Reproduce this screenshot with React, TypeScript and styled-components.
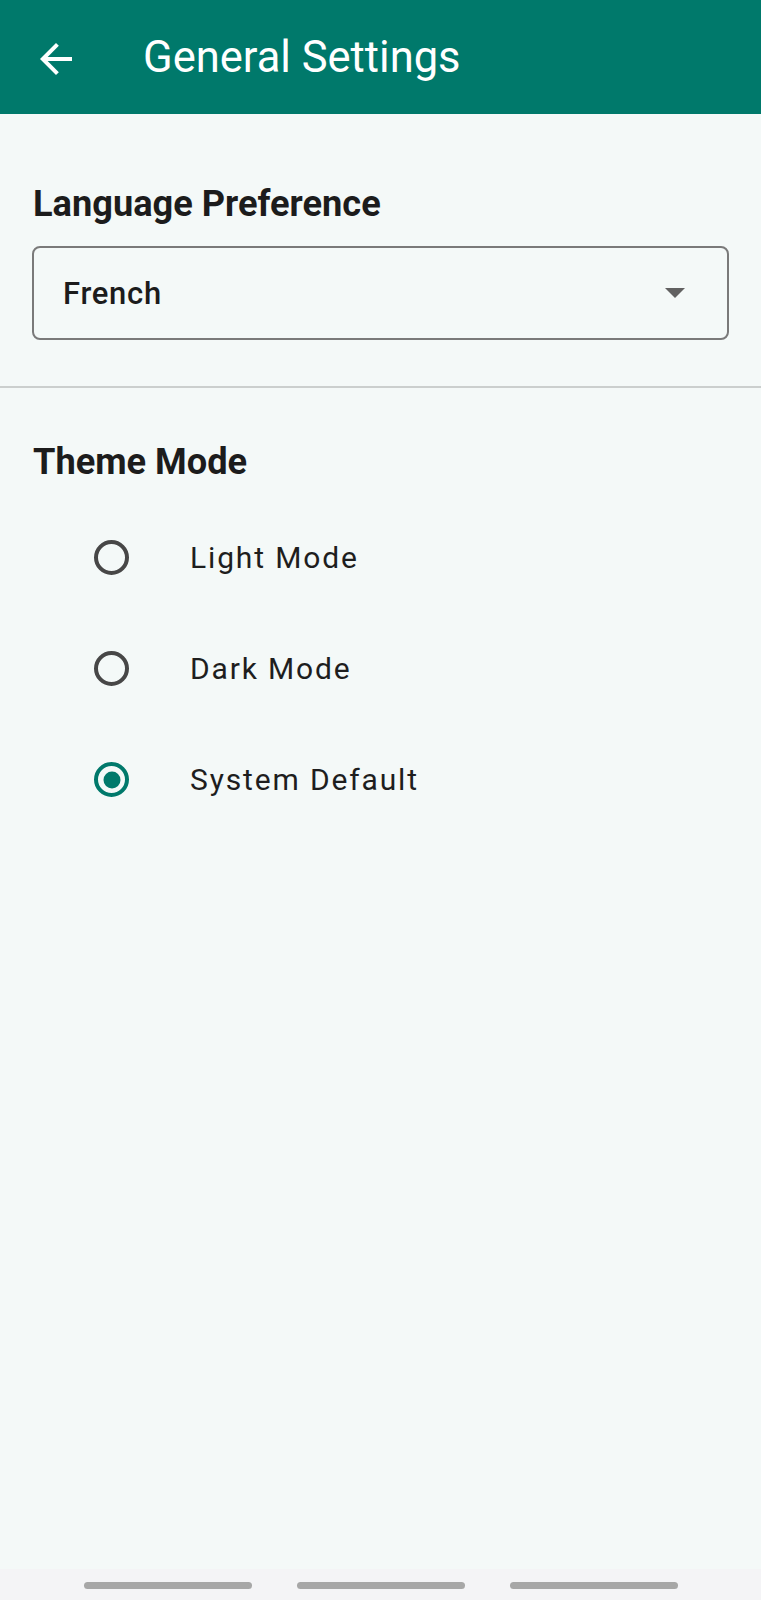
import React, { useState } from "react";
import styled, { createGlobalStyle } from "styled-components";

const GlobalStyle = createGlobalStyle`
  html, body {
    margin: 0;
    padding: 0;
  }

  body {
    background: #f4f9f8;
    font-family: Roboto, "Noto Sans", "Liberation Sans", sans-serif;
    -webkit-font-smoothing: antialiased;
  }
`;

const StyledPage = styled.div`
  display: flex;
  flex-direction: column;
  min-height: 1600px;
  background: #f4f9f8;
`;

const StyledAppBar = styled.header`
  display: flex;
  align-items: center;
  height: 114px;
  padding-left: 32px;
  background: #00796b;
  box-sizing: border-box;
`;

const StyledBackButton = styled.button`
  display: flex;
  align-items: center;
  justify-content: center;
  width: 48px;
  height: 48px;
  margin-top: 4px;
  padding: 0;
  border: none;
  background: transparent;
  color: #ffffff;
  cursor: pointer;
`;

const StyledTitle = styled.h1`
  margin: 0 0 0 63px;
  font-size: 43.5px;
  font-weight: 400;
  line-height: normal;
  color: #ffffff;
`;

const StyledMain = styled.main`
  flex: 1;
`;

const StyledSection = styled.section<{ $top: number; $bottom: number }>`
  padding: ${({ $top, $bottom }) => `${$top}px 32px ${$bottom}px`};
`;

const StyledHeading = styled.h2`
  margin: 0 0 0 1px;
  font-size: 36.2px;
  font-weight: 700;
  line-height: 44px;
  color: #1c1c1c;
`;

const StyledSelect = styled.div`
  display: flex;
  align-items: center;
  justify-content: space-between;
  height: 94px;
  margin-top: 20px;
  padding: 0 42px 0 29px;
  border: 2px solid #7a7a7a;
  border-radius: 8px;
  box-sizing: border-box;
  cursor: pointer;
`;

const StyledSelectValue = styled.span`
  font-size: 31px;
  font-weight: 500;
  letter-spacing: 0.7px;
  color: #1c1c1c;
`;

const StyledCaret = styled.span`
  width: 0;
  height: 0;
  border-left: 10px solid transparent;
  border-right: 10px solid transparent;
  border-top: 10px solid #616161;
`;

const StyledDivider = styled.hr`
  margin: 0;
  border: none;
  height: 2px;
  background: #cbcfce;
`;

const StyledRadioList = styled.div`
  display: flex;
  flex-direction: column;
  margin-top: 18px;
`;

const StyledRadioRow = styled.label`
  display: flex;
  align-items: center;
  height: 111px;
  padding-left: 62px;
  cursor: pointer;
`;

const StyledRadio = styled.span<{ $checked: boolean }>`
  position: relative;
  flex: none;
  width: 35px;
  height: 35px;
  border: 4px solid ${({ $checked }) => ($checked ? "#00796b" : "#474747")};
  border-radius: 50%;
  box-sizing: border-box;

  &::after {
    content: "";
    display: ${({ $checked }) => ($checked ? "block" : "none")};
    position: absolute;
    top: 50%;
    left: 50%;
    width: 17px;
    height: 17px;
    border-radius: 50%;
    background: #00796b;
    transform: translate(-50%, -50%);
  }
`;

const StyledRadioLabel = styled.span`
  margin-left: 61px;
  font-size: 30px;
  font-weight: 400;
  letter-spacing: 1.85px;
  color: #1e1e1e;
`;

const StyledNavBar = styled.div`
  display: flex;
  justify-content: center;
  gap: 45px;
  height: 31px;
  padding-top: 13px;
  background: #f4f4f6;
  box-sizing: border-box;
`;

const StyledNavPill = styled.span`
  width: 168px;
  height: 7px;
  border-radius: 4px;
  background: #a7a7a7;
`;

const themeOptions = ["Light Mode", "Dark Mode", "System Default"];

const ArrowBack = () => (
  <svg width="48" height="48" viewBox="0 0 24 24" fill="currentColor">
    <path d="M20 11H7.83l5.59-5.59L12 4l-8 8 8 8 1.41-1.41L7.83 13H20v-2z" />
  </svg>
);

const App = () => {
  const [theme, setTheme] = useState("System Default");

  return (
    <StyledPage>
      <GlobalStyle />
      <StyledAppBar>
        <StyledBackButton aria-label="Back">
          <ArrowBack />
        </StyledBackButton>
        <StyledTitle>General Settings</StyledTitle>
      </StyledAppBar>
      <StyledMain>
        <StyledSection $top={68} $bottom={46}>
          <StyledHeading>Language Preference</StyledHeading>
          <StyledSelect>
            <StyledSelectValue>French</StyledSelectValue>
            <StyledCaret />
          </StyledSelect>
        </StyledSection>
        <StyledDivider />
        <StyledSection $top={52} $bottom={0}>
          <StyledHeading>Theme Mode</StyledHeading>
          <StyledRadioList>
            {themeOptions.map(option => (
              <StyledRadioRow key={option} onClick={() => setTheme(option)}>
                <StyledRadio $checked={theme === option} />
                <StyledRadioLabel>{option}</StyledRadioLabel>
              </StyledRadioRow>
            ))}
          </StyledRadioList>
        </StyledSection>
      </StyledMain>
      <StyledNavBar>
        <StyledNavPill />
        <StyledNavPill />
        <StyledNavPill />
      </StyledNavBar>
    </StyledPage>
  );
};

export default App;
